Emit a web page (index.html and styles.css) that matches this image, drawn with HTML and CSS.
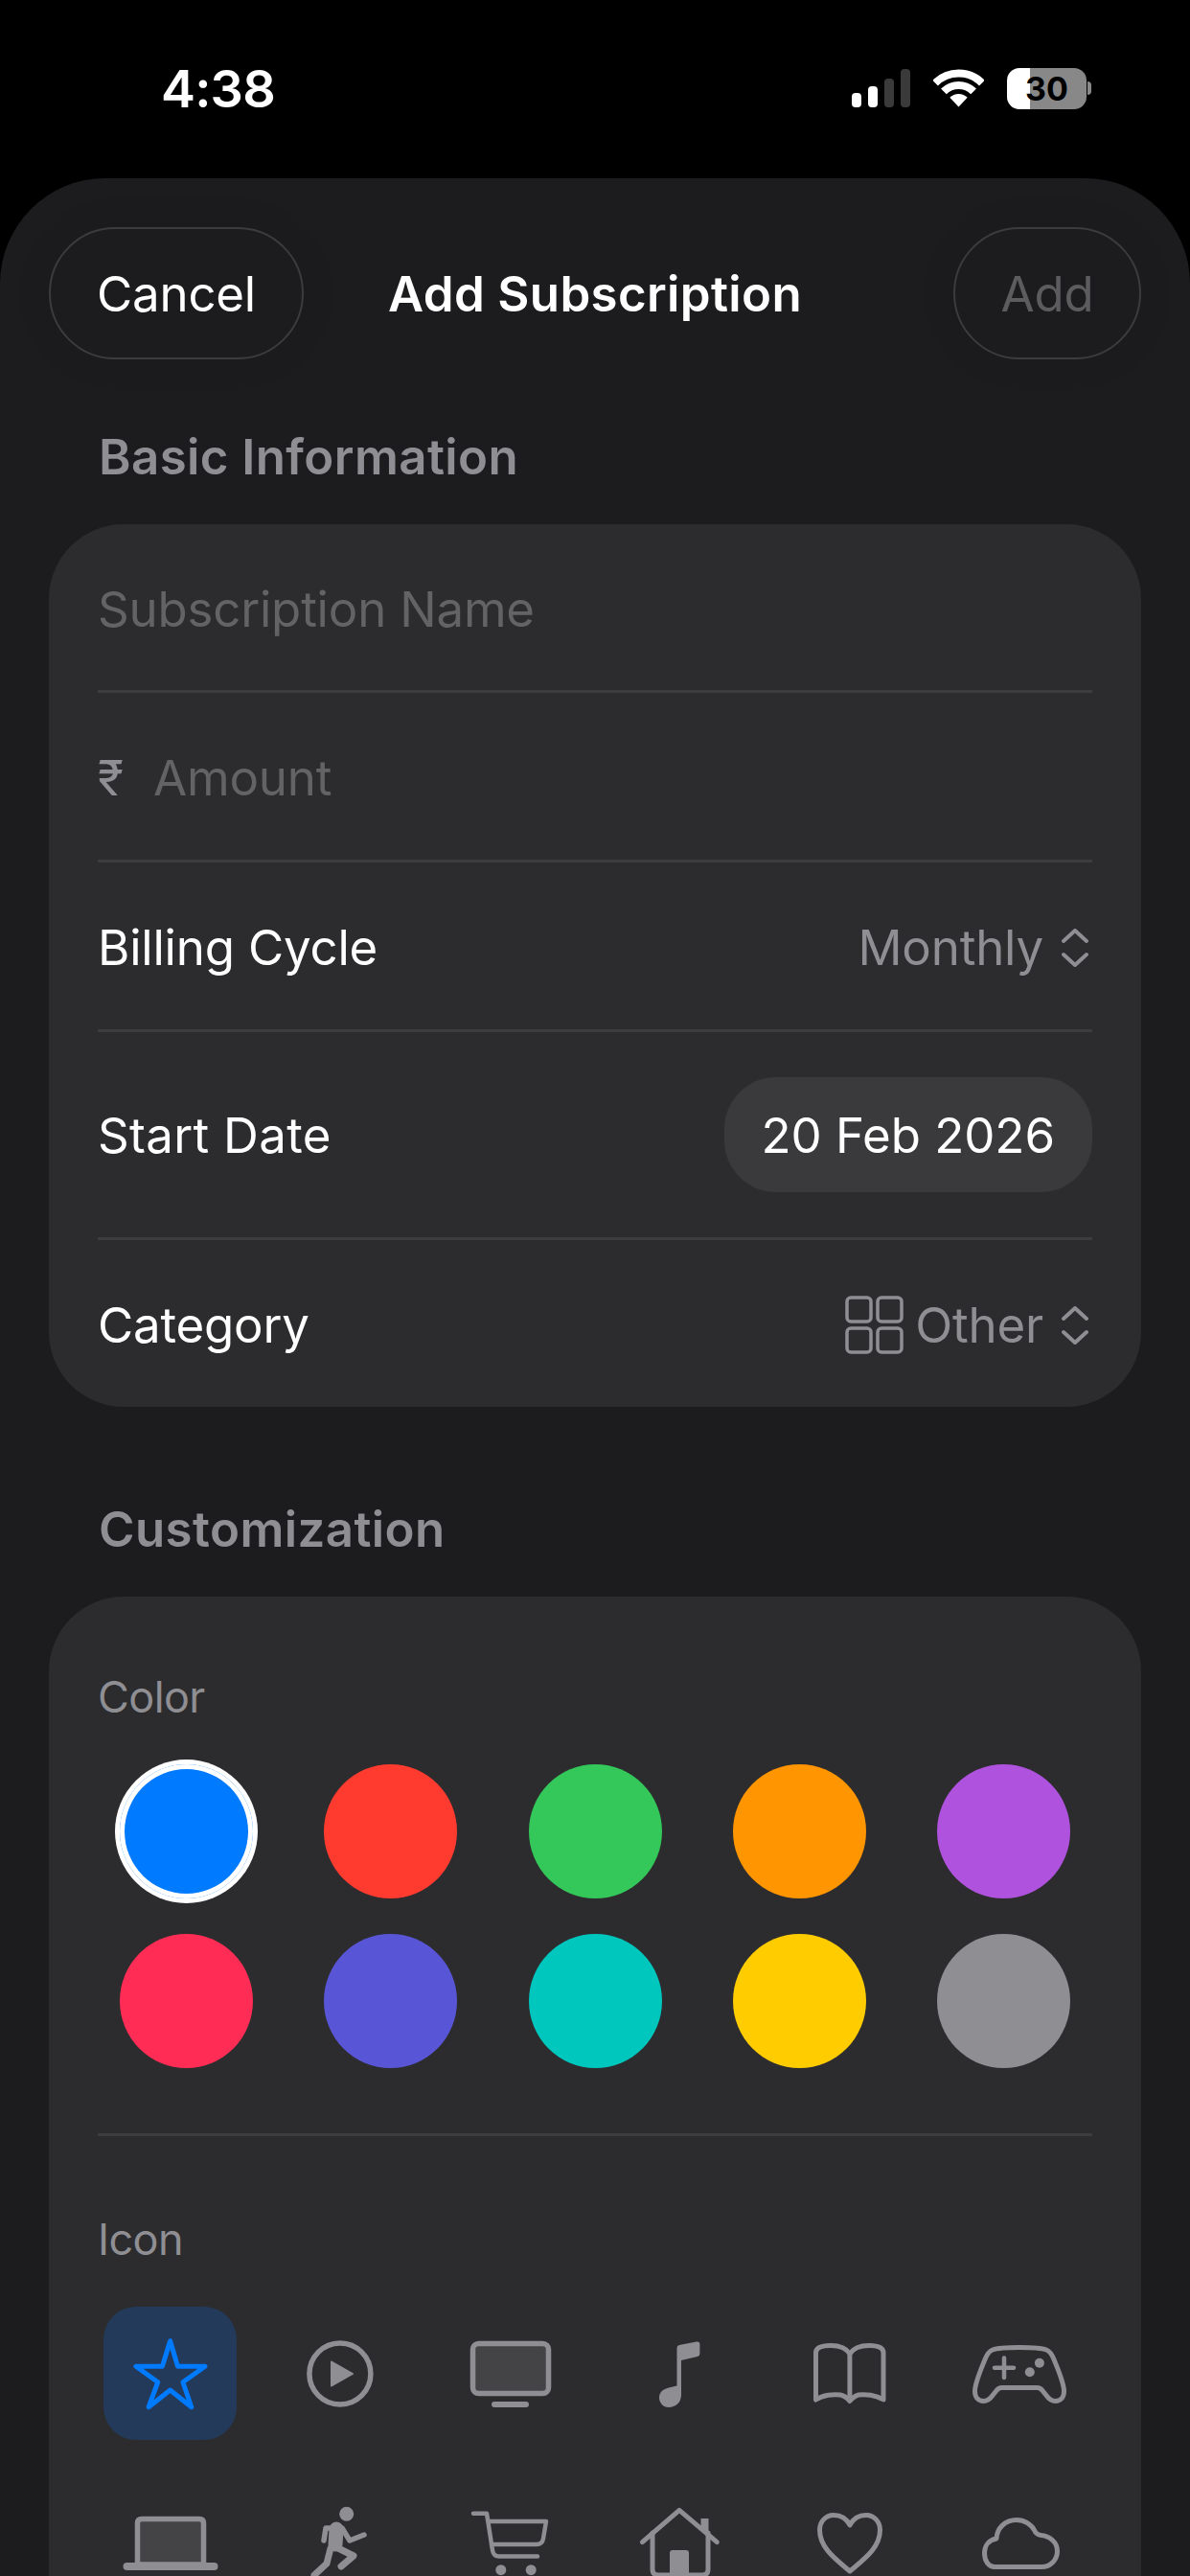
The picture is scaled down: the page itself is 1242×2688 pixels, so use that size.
FILE: index.html
```html
<!DOCTYPE html>
<html lang="en">
<head>
<meta charset="UTF-8" />
<meta name="viewport" content="width=device-width, initial-scale=1.0" />
<title>Add Subscription</title>
<link rel="stylesheet" href="styles.css">
</head>
<body>
<div class="status-bar">
    <span class="time">4:38</span>
    <div class="status-icons">
        <div class="signal">
            <span class="bar bar1"></span>
            <span class="bar bar2"></span>
            <span class="bar bar3"></span>
            <span class="bar bar4"></span>
        </div>
        <svg class="wifi" width="53" height="40" viewBox="0 0 53 40" fill="none" stroke="#fff" stroke-width="8">
            <path d="M2.1 14.6A34.5 34.5 0 0 1 50.9 14.6"/>
            <path d="M10.9 23.4A22 22 0 0 1 42.1 23.4"/>
            <path d="M17.3 29.8A13 13 0 0 1 35.7 29.8L26.5 39.5Z" fill="#fff" stroke="none"/>
        </svg>
        <div class="battery-wrap">
            <div class="battery">30</div>
            <span class="battery-nub"></span>
        </div>
    </div>
</div>

<div class="sheet">
    <div class="nav">
        <button type="button" class="nav-btn cancel">Cancel</button>
        <span class="nav-title">Add Subscription</span>
        <button type="button" class="nav-btn add">Add</button>
    </div>

    <h2 class="section-title first">Basic Information</h2>
    <div class="card">
        <div class="row row1"><span class="placeholder">Subscription Name</span></div>
        <div class="row row2"><span class="rupee">₹</span><span class="placeholder">Amount</span></div>
        <div class="row row3">
            <span>Billing Cycle</span>
            <span class="value">Monthly
                <svg class="updown" width="28" height="40" viewBox="0 0 28 40" fill="none" stroke="#8e8e93" stroke-width="4" stroke-linecap="round" stroke-linejoin="round">
                    <path d="M2 13L14 2L26 13"/><path d="M2 27L14 38L26 27"/>
                </svg>
            </span>
        </div>
        <div class="row row4">
            <span class="wide-text">Start Date</span>
            <span class="date-pill">20 Feb 2026</span>
        </div>
        <div class="row row5">
            <span>Category</span>
            <span class="value">
                <svg class="grid-icon" width="61" height="61" viewBox="0 0 61 61" fill="none" stroke="#8e8e93" stroke-width="3.5">
                    <rect x="2" y="2" width="25" height="25" rx="4"/>
                    <rect x="34" y="2" width="25" height="25" rx="4"/>
                    <rect x="2" y="34" width="25" height="25" rx="4"/>
                    <rect x="34" y="34" width="25" height="25" rx="4"/>
                </svg>
                <span class="cat-name">Other</span>
                <svg class="updown" width="28" height="40" viewBox="0 0 28 40" fill="none" stroke="#8e8e93" stroke-width="4" stroke-linecap="round" stroke-linejoin="round">
                    <path d="M2 13L14 2L26 13"/><path d="M2 27L14 38L26 27"/>
                </svg>
            </span>
        </div>
    </div>

    <h2 class="section-title second">Customization</h2>
    <div class="card custom">
        <div class="sub-label">Color</div>
        <div class="swatches">
            <span class="swatch selected c-blue"></span>
            <span class="swatch c-red"></span>
            <span class="swatch c-green"></span>
            <span class="swatch c-orange"></span>
            <span class="swatch c-purple"></span>
            <span class="swatch c-pink"></span>
            <span class="swatch c-indigo"></span>
            <span class="swatch c-teal"></span>
            <span class="swatch c-yellow"></span>
            <span class="swatch c-gray"></span>
        </div>
        <div class="divider"></div>
        <div class="sub-label">Icon</div>
        <div class="icons">
            <!-- star -->
            <div class="tile active">
                <svg viewBox="0 0 139 139" fill="none" stroke="#007aff" stroke-width="5" stroke-linejoin="round">
                    <path d="M69.6 35.7L77.5 62.3H106L82.9 78.7L91.8 104.7L69.6 87L47.1 104.7L56.8 78.7L33.9 62.3H61.4Z"/>
                </svg>
            </div>
            <!-- play -->
            <div class="tile">
                <svg viewBox="0 0 139 139" fill="none" stroke="#8e8e93" stroke-width="5.5">
                    <circle cx="69.9" cy="70" r="32"/>
                    <path d="M61 57.5L83 70L61 82.5Z" fill="#8e8e93" stroke-width="2" stroke-linejoin="round"/>
                </svg>
            </div>
            <!-- tv -->
            <div class="tile">
                <svg viewBox="0 0 139 139" fill="none" stroke="#8e8e93" stroke-width="5.5">
                    <rect x="30.5" y="38.5" width="79" height="52" rx="6" fill="#444446"/>
                    <rect x="50" y="99" width="39" height="6" rx="3" fill="#8e8e93" stroke="none"/>
                </svg>
            </div>
            <!-- music note -->
            <div class="tile">
                <svg viewBox="0 0 139 139" fill="#8e8e93">
                    <path d="M66.5 43Q66.5 40.5 69 40L87 36.5Q90.4 36 90.4 39V49Q90.4 51.5 88 52L71 56V92C71 100 65 105 58 105C52 105 48 100 48 95C48 89 52 86 58 84.5L66.5 82.5Z"/>
                </svg>
            </div>
            <!-- book -->
            <div class="tile">
                <svg viewBox="0 0 139 139" fill="none" stroke="#8e8e93" stroke-width="5" stroke-linejoin="round">
                    <path d="M33.5 97V48C33.5 42 42 40.5 49 40.5C57 40.5 65 43 68.9 49C73 43 81 40.5 89 40.5C96 40.5 104 42 104 48V97C96 92 85 91 78 92C74 93 71 96 68.9 98.5C67 96 64 93 59 92C52 91 41 92 33.5 97Z"/>
                    <path d="M68.9 49V98"/>
                </svg>
            </div>
            <!-- game controller -->
            <div class="tile">
                <svg viewBox="0 0 139 139" fill="none" stroke="#8e8e93" stroke-width="5">
                    <path d="M69 42.5C80 42.5 92 43 97 45C101 46.5 103 50 105 55C110 67 115.5 80 115.5 88C115.5 95 111.5 98.5 106.5 98.5C102 98.5 99.5 96 97 92.5L93 87.5C91.5 85.5 90 84.5 87.5 84.5H50.5C48 84.5 46.5 85.5 45 87.5L41 92.5C38.5 96 36 98.5 31.5 98.5C26.5 98.5 22.5 95 22.5 88C22.5 80 28 67 33 55C35 50 37 46.5 41 45C46 43 58 42.5 69 42.5Z"/>
                    <path d="M53 53.5V74M43 63.7H63" stroke-width="4.5" stroke-linecap="round"/>
                    <circle cx="79.8" cy="68.3" r="5" fill="#8e8e93" stroke="none"/>
                    <circle cx="89.9" cy="58.7" r="5" fill="#8e8e93" stroke="none"/>
                </svg>
            </div>
            <!-- laptop -->
            <div class="tile">
                <svg viewBox="0 0 139 139" fill="none" stroke="#8e8e93" stroke-width="5.5">
                    <path d="M35.5 93V50Q35.5 45.5 40 45.5H100Q104.5 45.5 104.5 50V93Z" fill="#444446"/>
                    <rect x="20.5" y="91" width="99" height="8" rx="4" fill="#8e8e93" stroke="none"/>
                </svg>
            </div>
            <!-- running figure -->
            <div class="tile">
                <svg viewBox="0 0 139 139" fill="none" stroke="#8e8e93" stroke-linecap="round" stroke-linejoin="round">
                    <circle cx="76.7" cy="40.3" r="7.5" fill="#8e8e93" stroke="none"/>
                    <path d="M53 68L55 55H72L80 68L95 62" stroke-width="5.5"/>
                    <path d="M66 56L65 72" stroke-width="15"/>
                    <path d="M68 76L84 84L71 95" stroke-width="7"/>
                    <path d="M60 76L56 92L43 104" stroke-width="7"/>
                </svg>
            </div>
            <!-- cart -->
            <div class="tile">
                <svg viewBox="0 0 139 139" fill="none" stroke="#8e8e93" stroke-width="4.5" stroke-linecap="round" stroke-linejoin="round">
                    <path d="M31 39.7H45L51 78Q52 84.5 58 84.5H98"/>
                    <path d="M47 48H107L104 66Q103 72 97 72H50"/>
                    <circle cx="59.8" cy="98.7" r="5.5" fill="#8e8e93" stroke="none"/>
                    <circle cx="91.2" cy="98.7" r="5.5" fill="#8e8e93" stroke="none"/>
                </svg>
            </div>
            <!-- house -->
            <div class="tile">
                <svg viewBox="0 0 139 139" fill="none" stroke="#8e8e93" stroke-width="5" stroke-linecap="round" stroke-linejoin="round">
                    <path d="M30.4 69.7L69 36.3L108.3 69.7"/>
                    <path d="M41 60V98Q41 104 47 104H93Q99 104 99 98V60"/>
                    <path d="M95.5 45V58" stroke-width="8" stroke-linecap="butt"/>
                    <path d="M59 104V81Q59 78 62 78H76Q79 78 79 81V104Z" fill="#8e8e93" stroke="none"/>
                </svg>
            </div>
            <!-- heart -->
            <div class="tile">
                <svg viewBox="0 0 139 139" fill="none" stroke="#8e8e93" stroke-width="5" stroke-linejoin="round">
                    <path d="M69 100C55 88 37.5 76 37.5 57C37.5 48 44 41.5 52 41.5C59 41.5 65.5 45 69 52C72.5 45 79 41.5 86 41.5C94 41.5 100.5 48 100.5 57C100.5 76 83 88 69 100Z"/>
                </svg>
            </div>
            <!-- cloud -->
            <div class="tile">
                <svg viewBox="0 0 139 139" fill="none" stroke="#8e8e93" stroke-width="5" stroke-linejoin="round">
                    <path d="M43 95.5H92C102 95.5 108.5 87.5 108.5 79C108.5 70 101 63.5 92 62.5C88.5 62 86 61 85 58C81.5 51 74 46.5 66 46.5C54 46.5 45.5 55 45 66C36.5 67.5 32.5 74 32.5 81C32.5 89.5 37 95.5 43 95.5Z"/>
                </svg>
            </div>
        </div>
    </div>
</div>
</body>
</html>
```

FILE: styles.css
```css
* {
    box-sizing: border-box;
}

html, body {
    margin: 0;
    padding: 0;
}

body {
    width: 1242px;
    height: 2688px;
    overflow: hidden;
    background-color: #000;
    color: #fff;
    font-family: Inter, "Noto Sans", sans-serif;
    font-size: 51px;
    letter-spacing: -0.2px;
}

/* status bar */
.status-bar {
    height: 186px;
    padding: 60px 103px 62px 168px;
    display: flex;
    align-items: center;
    justify-content: space-between;
}

.time {
    font-size: 54px;
    font-weight: 600;
    letter-spacing: -0.8px;
}

.status-icons {
    display: flex;
    align-items: center;
    gap: 24px;
}

.signal {
    display: flex;
    align-items: flex-end;
    gap: 7px;
    height: 40px;
}

.bar {
    width: 10px;
    border-radius: 4px;
    background-color: #fff;
}

.bar1 { height: 15px; }
.bar2 { height: 22px; }
.bar3 { height: 30px; background-color: #3a3a3a; }
.bar4 { height: 40px; background-color: #3a3a3a; }

.battery-wrap {
    display: flex;
    align-items: center;
    gap: 1px;
}

.battery {
    width: 83px;
    height: 43px;
    border-radius: 13px;
    background: linear-gradient(90deg, #fff 29%, #888 29%);
    color: #000;
    font-size: 34px;
    font-weight: 700;
    letter-spacing: 0;
    display: flex;
    align-items: center;
    justify-content: center;
}

.battery-nub {
    width: 4px;
    height: 14px;
    border-radius: 0 7px 7px 0;
    background-color: #888;
}

/* sheet */
.sheet {
    height: 2502px;
    padding: 51px 51px 0;
    background-color: #1c1c1e;
    border-radius: 110px 110px 0 0;
}

.nav {
    display: grid;
    grid-template-columns: 1fr auto 1fr;
    align-items: center;
    height: 138px;
}

.nav-btn {
    height: 138px;
    padding: 0;
    border: 2.5px solid #3c3c3f;
    border-radius: 69px;
    background-color: #1c1c1e;
    box-shadow: 0 0 40px rgba(0, 0, 0, 0.08);
    font-family: inherit;
    font-size: 51px;
    letter-spacing: -0.2px;
}

.cancel {
    justify-self: start;
    width: 266px;
    color: #fff;
}

.add {
    justify-self: end;
    width: 196px;
    color: #5c5c5f;
}

.nav-title {
    font-weight: 600;
    letter-spacing: 0.35px;
}

.section-title {
    margin: 0 0 40px;
    padding-left: 52px;
    height: 60px;
    line-height: 60px;
    font-size: 51px;
    font-weight: 600;
    letter-spacing: 0.4px;
    color: #8e8e93;
}

.section-title.first {
    margin-top: 72px;
}

.section-title.second {
    margin-top: 98px;
}

.card {
    padding: 0 51px;
    border-radius: 78px;
    background-color: #2c2c2e;
}

.row {
    display: flex;
    align-items: center;
    justify-content: space-between;
    border-bottom: 3px solid #3d3d40;
}

.row1 { height: 176px; padding-top: 3px; }
.row2 { height: 177px; padding-top: 3px; justify-content: flex-start; }
.row3 { height: 177px; padding-top: 3px; }
.row4 { height: 217px; }
.row5 { height: 174px; padding-top: 3px; border-bottom: none; }

.placeholder {
    color: #636366;
}

.rupee {
    width: 58px;
    font-size: 50px;
    color: #8e8e93;
}

.value {
    display: flex;
    align-items: center;
    gap: 19px;
    color: #8e8e93;
}

.wide-text {
    letter-spacing: 0.3px;
}

.updown {
    margin-right: 4px;
}

.grid-icon {
    margin-right: -7px;
}

.date-pill {
    height: 120px;
    padding: 0 39px;
    border-radius: 54px;
    background-color: #3a3a3c;
    letter-spacing: -0.05px;
    display: flex;
    align-items: center;
}

/* customization */
.custom {
    padding-top: 77px;
    height: 1100px;
}

.sub-label {
    height: 56px;
    line-height: 56px;
    margin-bottom: 42px;
    font-size: 45px;
    letter-spacing: -0.6px;
    color: #8e8e93;
}

.swatches {
    display: grid;
    grid-template-columns: repeat(5, 139px);
    justify-content: space-between;
    row-gap: 37px;
    margin: 0 23px;
}

.swatch {
    height: 140px;
    border-radius: 50%;
}

.selected {
    box-shadow: inset 0 0 0 5px #fff, 0 0 0 5px #fff;
}

.c-blue { background-color: #007aff; }
.c-red { background-color: #ff3b30; }
.c-green { background-color: #34c759; }
.c-orange { background-color: #ff9500; }
.c-purple { background-color: #af52de; }
.c-pink { background-color: #ff2d55; }
.c-indigo { background-color: #5856d6; }
.c-teal { background-color: #00c7be; }
.c-yellow { background-color: #ffcc00; }
.c-gray { background-color: #8e8e93; }

.divider {
    height: 3px;
    margin: 68px 0 80px;
    background-color: #3d3d40;
}

.icons {
    display: grid;
    grid-template-columns: repeat(6, 139px);
    justify-content: space-between;
    row-gap: 37px;
    margin: 0 6px;
}

.tile {
    height: 139px;
    border-radius: 34px;
}

.tile svg {
    display: block;
    width: 139px;
    height: 139px;
}

.active {
    background-color: #233a5a;
}
```
